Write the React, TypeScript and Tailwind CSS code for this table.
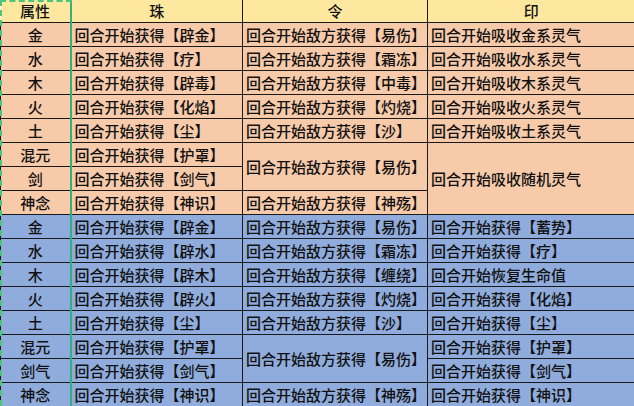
import React from 'react';

type Cell = { text: string; span?: number } | null;
type Row = { attr: string; zhu: string; ling: Cell; yin: Cell };

const salmon: Row[] = [
  { attr: '金', zhu: '回合开始获得【辟金】', ling: { text: '回合开始敌方获得【易伤】' }, yin: { text: '回合开始吸收金系灵气' } },
  { attr: '水', zhu: '回合开始获得【疗】', ling: { text: '回合开始敌方获得【霜冻】' }, yin: { text: '回合开始吸收水系灵气' } },
  { attr: '木', zhu: '回合开始获得【辟毒】', ling: { text: '回合开始敌方获得【中毒】' }, yin: { text: '回合开始吸收木系灵气' } },
  { attr: '火', zhu: '回合开始获得【化焰】', ling: { text: '回合开始敌方获得【灼烧】' }, yin: { text: '回合开始吸收火系灵气' } },
  { attr: '土', zhu: '回合开始获得【尘】', ling: { text: '回合开始敌方获得【沙】' }, yin: { text: '回合开始吸收土系灵气' } },
  { attr: '混元', zhu: '回合开始获得【护罩】', ling: { text: '回合开始敌方获得【易伤】', span: 2 }, yin: { text: '回合开始吸收随机灵气', span: 3 } },
  { attr: '剑', zhu: '回合开始获得【剑气】', ling: null, yin: null },
  { attr: '神念', zhu: '回合开始获得【神识】', ling: { text: '回合开始敌方获得【神殇】' }, yin: null },
];

const blue: Row[] = [
  { attr: '金', zhu: '回合开始获得【辟金】', ling: { text: '回合开始敌方获得【易伤】' }, yin: { text: '回合开始获得【蓄势】' } },
  { attr: '水', zhu: '回合开始获得【辟水】', ling: { text: '回合开始敌方获得【霜冻】' }, yin: { text: '回合开始获得【疗】' } },
  { attr: '木', zhu: '回合开始获得【辟木】', ling: { text: '回合开始敌方获得【缠绕】' }, yin: { text: '回合开始恢复生命值' } },
  { attr: '火', zhu: '回合开始获得【辟火】', ling: { text: '回合开始敌方获得【灼烧】' }, yin: { text: '回合开始获得【化焰】' } },
  { attr: '土', zhu: '回合开始获得【尘】', ling: { text: '回合开始敌方获得【沙】' }, yin: { text: '回合开始获得【尘】' } },
  { attr: '混元', zhu: '回合开始获得【护罩】', ling: { text: '回合开始敌方获得【易伤】', span: 2 }, yin: { text: '回合开始获得【护罩】' } },
  { attr: '剑气', zhu: '回合开始获得【剑气】', ling: null, yin: { text: '回合开始获得【剑气】' } },
  { attr: '神念', zhu: '回合开始获得【神识】', ling: { text: '回合开始敌方获得【神殇】' }, yin: { text: '回合开始获得【神识】' } },
];

const td = 'border border-[#1a1a1a] pl-[3px] pr-0 py-0 text-left whitespace-nowrap align-middle';
const attrTd = 'border-y border-l border-[#1a1a1a] border-r-2 border-r-[#35b07c] text-center align-middle';

const Section = ({ rows, bg }: { rows: Row[]; bg: string }) => (
  <>
    {rows.map((r, i) => (
      <tr key={i} className={`h-[24px] ${bg}`}>
        <td className={attrTd}>{r.attr}</td>
        <td className={td}>{r.zhu}</td>
        {r.ling && (
          <td className={td} rowSpan={r.ling.span}>
            {r.ling.text}
          </td>
        )}
        {r.yin && (
          <td className={td} rowSpan={r.yin.span}>
            {r.yin.text}
          </td>
        )}
      </tr>
    ))}
  </>
);

export default function App() {
  return (
    <div
      className="relative w-[634px] h-[406px] overflow-hidden bg-white text-[#111] text-[15px] font-medium leading-none"
      style={{ fontFamily: '"Noto Sans CJK SC", "Noto Sans", sans-serif' }}
    >
      <table className="w-[640px] table-fixed border-collapse">
        <colgroup>
          <col className="w-[70px]" />
          <col className="w-[172px]" />
          <col className="w-[185px]" />
          <col className="w-[213px]" />
        </colgroup>
        <thead>
          <tr className="h-[22px] bg-[#fee89f]">
            <th className="border-b border-[#1a1a1a] border-r-2 border-r-[#35b07c] font-medium text-center">属性</th>
            <th className="border-b border-r border-[#1a1a1a] font-medium text-center">珠</th>
            <th className="border-b border-r border-[#1a1a1a] font-medium text-center">令</th>
            <th className="border-b border-[#1a1a1a] font-medium text-center pr-[6px]">印</th>
          </tr>
        </thead>
        <tbody>
          <Section rows={salmon} bg="bg-[#f7caaa]" />
          <Section rows={blue} bg="bg-[#90acdc]" />
        </tbody>
      </table>
      {/* column selection marquee */}
      <div className="pointer-events-none absolute left-0 top-0 h-full w-[72px] border-l-2 border-t-2 border-dashed border-[#4cc47a]" />
    </div>
  );
}
